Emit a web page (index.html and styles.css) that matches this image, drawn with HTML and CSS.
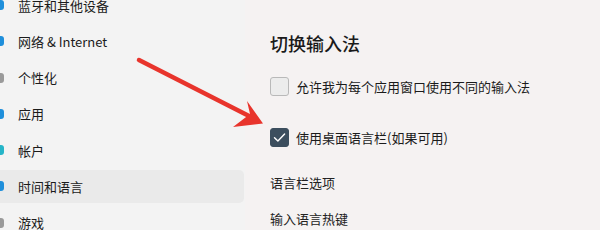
FILE: index.html
```html
<!DOCTYPE html>
<html lang="zh-CN">
<head>
<meta charset="utf-8">
<link rel="stylesheet" href="styles.css">
</head>
<body>
<div class="window">
  <nav class="sidebar">
    <ul class="nav-list">
      <li class="nav-item"><span class="ico ico-blue"></span><span>蓝牙和其他设备</span></li>
      <li class="nav-item"><span class="ico ico-blue"></span><span>网络 &amp; Internet</span></li>
      <li class="nav-item"><span class="ico ico-gray"></span><span>个性化</span></li>
      <li class="nav-item"><span class="ico ico-blue"></span><span>应用</span></li>
      <li class="nav-item"><span class="ico ico-teal"></span><span>帐户</span></li>
      <li class="nav-item active"><span class="ico ico-blue"></span><span>时间和语言</span></li>
      <li class="nav-item"><span class="ico ico-gray"></span><span>游戏</span></li>
    </ul>
  </nav>
  <main class="content">
    <h2 class="heading">切换输入法</h2>
    <label class="check-row row1"><span class="box"></span><span>允许我为每个应用窗口使用不同的输入法</span></label>
    <label class="check-row row2"><span class="box checked"><svg viewBox="0 0 19 19" width="19" height="19"><path d="M4.5 9.8 L7.9 13.1 L14.6 5.9" fill="none" stroke="#ffffff" stroke-width="1.4" stroke-linecap="round" stroke-linejoin="round"/></svg></span><span>使用桌面语言栏(如果可用)</span></label>
    <div class="link link1">语言栏选项</div>
    <div class="link link2">输入语言热键</div>
  </main>
  <svg class="arrow" viewBox="0 0 600 230" width="600" height="230">
    <line x1="139" y1="60" x2="251" y2="117" stroke="#e8342c" stroke-width="4.5" stroke-linecap="round"/>
    <polygon points="263,123.5 247,101 250,114 233,127" fill="#e8342c"/>
  </svg>
</div>
</body>
</html>
```
FILE: styles.css
```css
html, body {
  margin: 0;
  padding: 0;
  background: #ffffff;
}
body {
  width: 600px;
  height: 241px;
  overflow: hidden;
  font-family: "Noto Sans CJK SC", "Noto Sans", sans-serif;
  color: #1b1b1b;
}
.window {
  position: relative;
  display: flex;
  height: 230px;
  overflow: hidden;
  background: #f5f2f2;
}
.sidebar {
  width: 245px;
  flex: none;
  background: #f3f3f3;
}
.nav-list {
  list-style: none;
  margin: -11.5px 0 0 0;
  padding: 0;
  display: flex;
  flex-direction: column;
  gap: 3.3px;
}
.nav-item {
  height: 33px;
  display: flex;
  align-items: center;
  font-size: 13px;
  border-radius: 0 5px 5px 0;
  width: 244px;
}
.nav-item.active {
  background: #eaeaea;
}
.ico {
  width: 10px;
  height: 10px;
  border-radius: 3px;
  margin-left: -6px;
  margin-right: 14px;
  flex: none;
}
.ico-blue { background: #1f8fdb; }
.ico-teal { background: #25b5c8; }
.ico-gray { background: #9a9a9a; }
.content {
  flex: 1;
  padding: 31px 0 0 25px;
  display: flex;
  flex-direction: column;
  background: #f5f2f2;
}
.heading {
  margin: 0;
  font-size: 18px;
  line-height: 24px;
  font-weight: 500;
  color: #1a1a1a;
}
.check-row {
  display: flex;
  align-items: center;
  gap: 7px;
  font-size: 13px;
  height: 19px;
}
.row1 { margin-top: 22px; }
.row2 { margin-top: 32px; }
.box {
  width: 19px;
  height: 19px;
  box-sizing: border-box;
  border: 1px solid #b9b9b9;
  border-radius: 3px;
  background: #ececec;
  flex: none;
  display: flex;
}
.box.checked {
  background: #3c4e5e;
  border-color: #3c4e5e;
}
.box.checked svg {
  margin: -1px;
}
.link {
  font-size: 13px;
  line-height: 20px;
  color: #222222;
}
.link1 { margin-top: 26px; }
.link2 { margin-top: 16px; }
.arrow {
  position: absolute;
  left: 0;
  top: 0;
  pointer-events: none;
}
```
